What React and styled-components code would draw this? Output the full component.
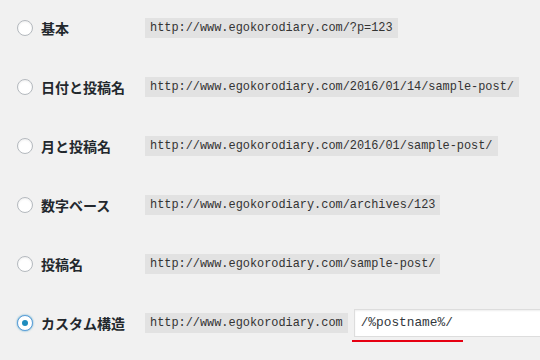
import React from "react";
import styled, { createGlobalStyle } from "styled-components";

const GlobalStyle = createGlobalStyle`
  html, body {
    margin: 0;
    padding: 0;
    background: #f1f1f1;
    overflow: hidden;
  }
`;

const options = [
  { label: "基本", url: "http://www.egokorodiary.com/?p=123" },
  { label: "日付と投稿名", url: "http://www.egokorodiary.com/2016/01/14/sample-post/" },
  { label: "月と投稿名", url: "http://www.egokorodiary.com/2016/01/sample-post/" },
  { label: "数字ベース", url: "http://www.egokorodiary.com/archives/123" },
  { label: "投稿名", url: "http://www.egokorodiary.com/sample-post/" },
  { label: "カスタム構造", url: "http://www.egokorodiary.com", custom: true, checked: true },
];

export default function App() {
  return (
    <>
      <GlobalStyle />
      <Container>
        {options.map((o) => (
          <Row key={o.label}>
            <Radio checked={o.checked} />
            <Label>{o.label}</Label>
            <Code>{o.url}</Code>
            {o.custom && (
              <InputWrap>
                <TextInput>/%postname%/</TextInput>
                <Underline />
              </InputWrap>
            )}
          </Row>
        ))}
      </Container>
    </>
  );
}

const Container = styled.div`
  display: flex;
  flex-direction: column;
  gap: 39px;
  padding: 18px 0 0 17px;
  width: 540px;
  height: 360px;
  box-sizing: border-box;
  overflow: hidden;
`;

const Row = styled.div`
  display: flex;
  align-items: center;
  height: 20px;
`;

const Radio = styled.span`
  position: relative;
  flex: none;
  width: 16px;
  height: 16px;
  border-radius: 50%;
  box-sizing: border-box;
  background: #fff;
  border: 1px solid ${(p) => (p.checked ? "#5b9dd9" : "#b4b9be")};
  box-shadow: ${(p) =>
    p.checked ? "0 0 2px rgba(30,140,190,0.8)" : "inset 0 1px 2px rgba(0,0,0,0.07)"};
  margin-right: 8px;

  &::after {
    content: "";
    display: ${(p) => (p.checked ? "block" : "none")};
    position: absolute;
    left: 4px;
    top: 4px;
    width: 6px;
    height: 6px;
    border-radius: 50%;
    background: #1e8cbe;
  }
`;

const Label = styled.span`
  width: 104px;
  flex: none;
  font-family: "Noto Sans CJK JP", "Noto Sans", sans-serif;
  font-weight: 700;
  font-size: 14px;
  color: #23282d;
`;

const Code = styled.code`
  flex: none;
  background: #e2e2e2;
  font-family: "Liberation Mono", "DejaVu Sans Mono", monospace;
  font-size: 11.9px;
  color: #333;
  line-height: 20px;
  padding: 0 5px;
  white-space: nowrap;
`;

const InputWrap = styled.div`
  position: relative;
  margin-left: 6px;
  flex: none;
`;

const TextInput = styled.div`
  width: 200px;
  height: 28px;
  box-sizing: border-box;
  background: #fff;
  border: 1px solid #ddd;
  box-shadow: inset 0 1px 2px rgba(0, 0, 0, 0.07);
  padding: 0 6px;
  font-family: "Liberation Mono", "DejaVu Sans Mono", monospace;
  font-size: 12.8px;
  line-height: 26px;
  color: #32373c;
`;

const Underline = styled.span`
  position: absolute;
  left: -2px;
  top: 31px;
  width: 111px;
  height: 2px;
  background: #e60012;
`;
